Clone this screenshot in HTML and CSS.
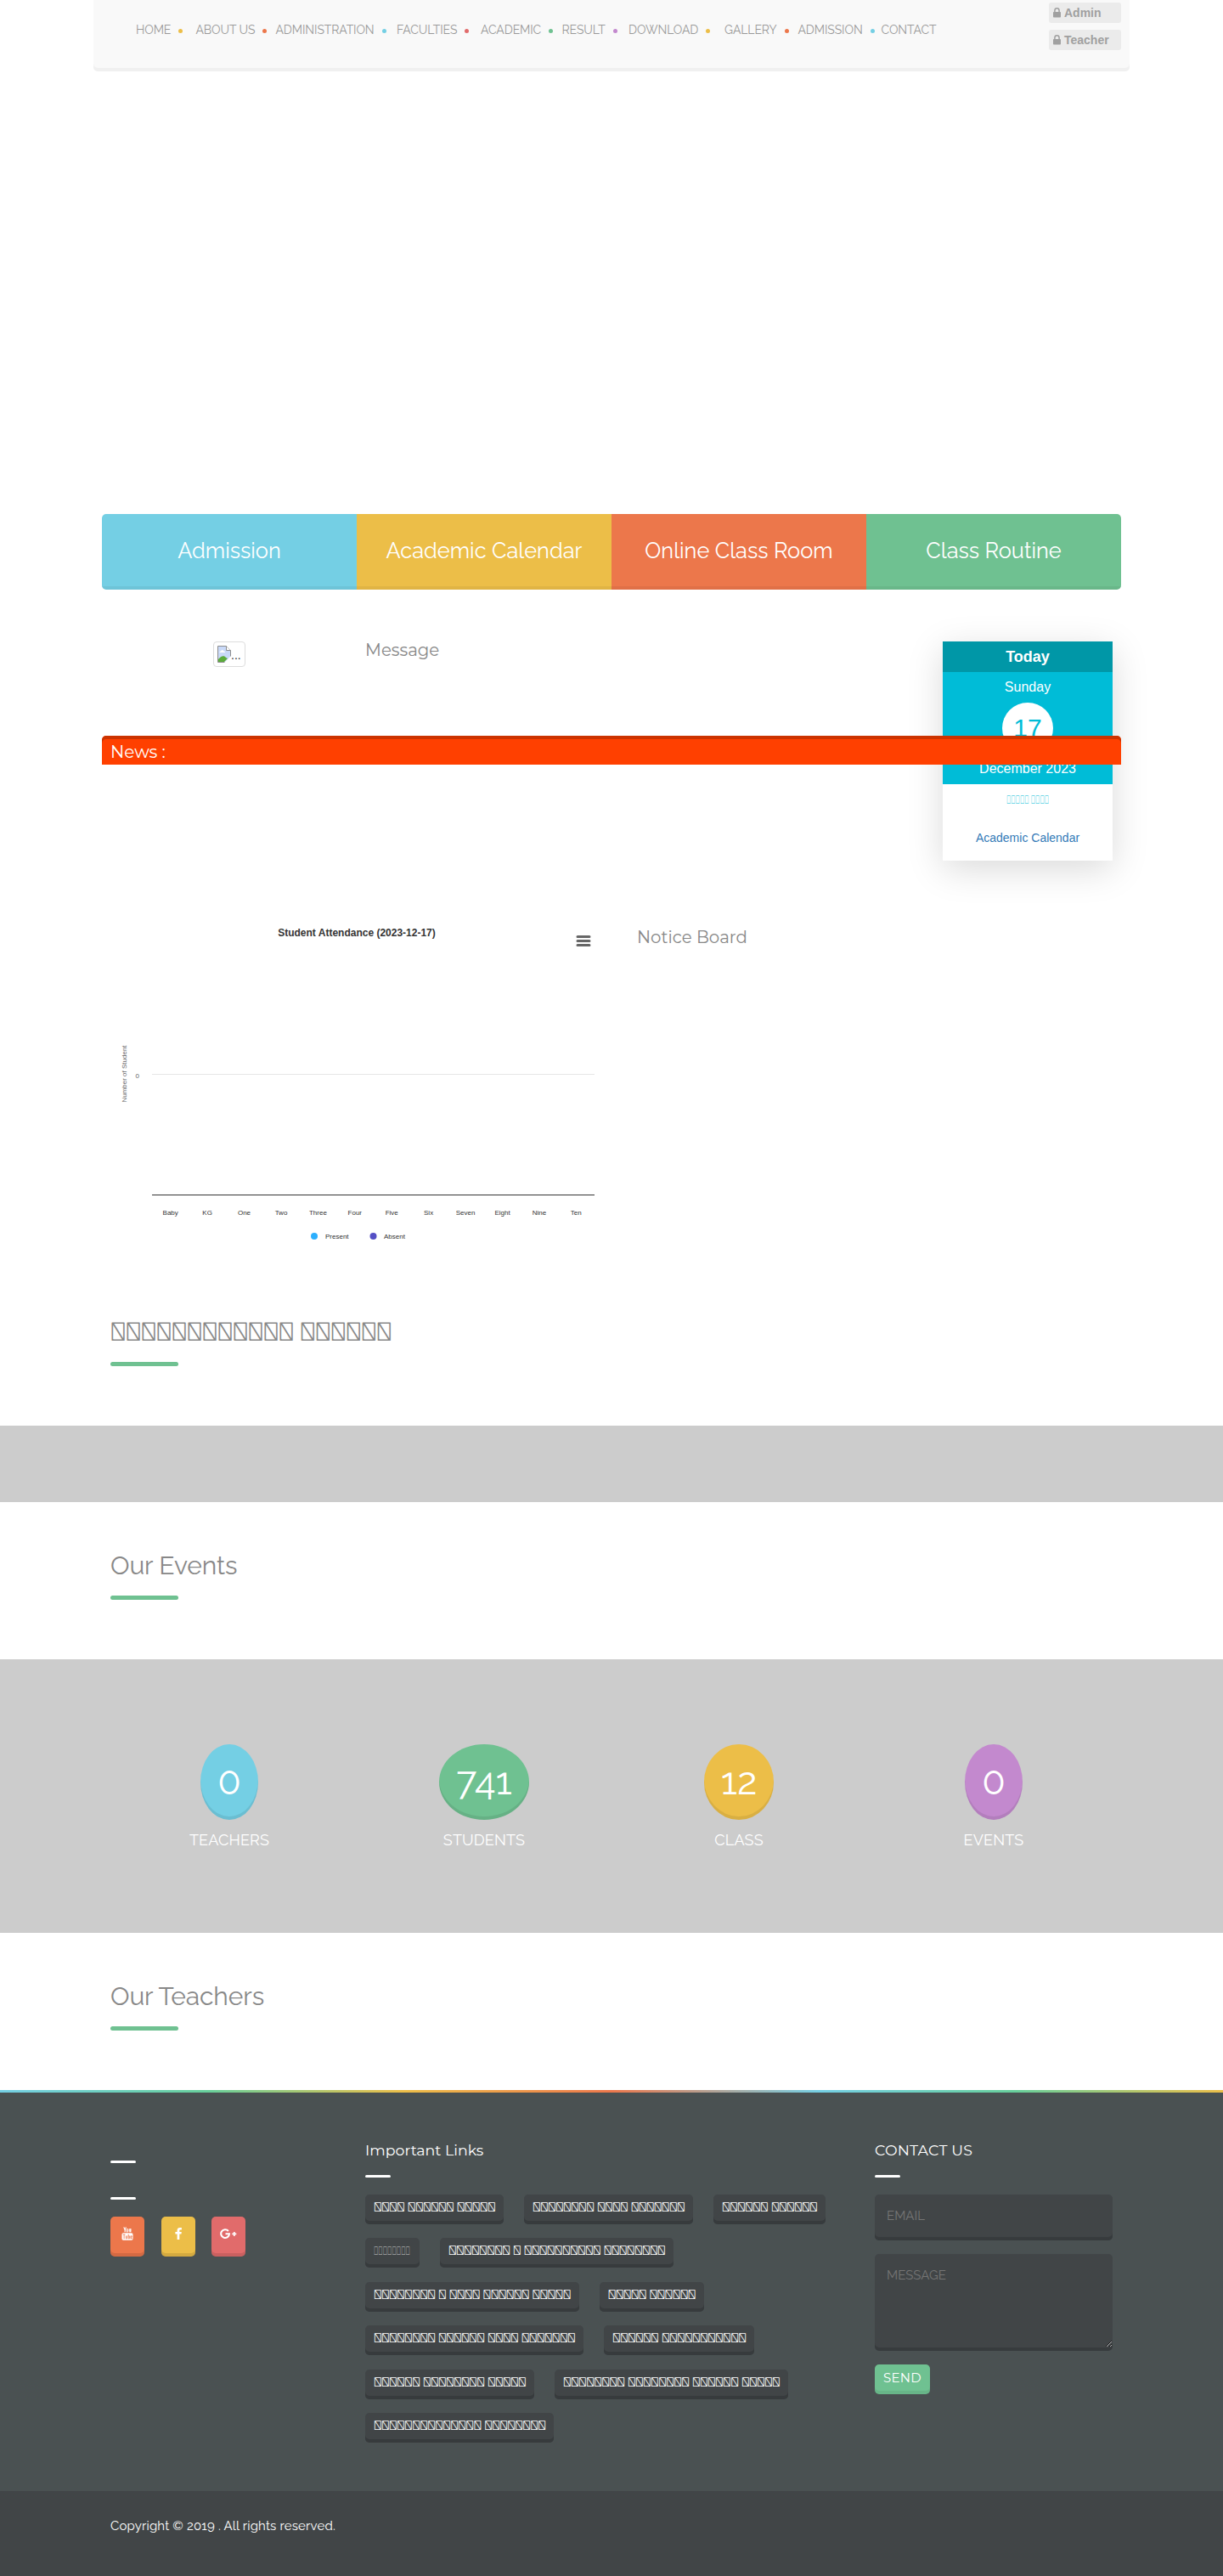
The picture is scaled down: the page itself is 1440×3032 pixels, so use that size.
FILE: index.html
```html
<!DOCTYPE html>
<html lang="en">
<head>
<meta charset="utf-8">
<title>School</title>
<link rel="stylesheet" href="styles.css">
</head>
<body>
<header class="topbar">
  <nav class="nav">
    <a class="yellow">HOME</a><a class="orange">ABOUT US</a><a class="blue">ADMINISTRATION</a><a class="red">FACULTIES</a><a class="green">ACADEMIC</a><a class="purple">RESULT</a><a class="yellow">DOWNLOAD</a><a class="orange">GALLERY</a><a class="blue">ADMISSION</a><a>CONTACT</a>
  </nav>
  <div class="logins">
    <a class="login"><svg width="9" height="12" viewBox="0 0 9 12"><path d="M1.9 5.5V3.4a2.6 2.6 0 0 1 5.2 0v2.1" fill="none" stroke="#a0a0a0" stroke-width="1.5"/><rect y="5" width="9" height="6.5" rx=".8" fill="#a0a0a0"/></svg>Admin</a>
    <a class="login"><svg width="9" height="12" viewBox="0 0 9 12"><path d="M1.9 5.5V3.4a2.6 2.6 0 0 1 5.2 0v2.1" fill="none" stroke="#a0a0a0" stroke-width="1.5"/><rect y="5" width="9" height="6.5" rx=".8" fill="#a0a0a0"/></svg>Teacher</a>
  </div>
</header>

<section class="features">
  <a class="bg-blue">Admission</a><a class="bg-yellow">Academic Calendar</a><a class="bg-orange">Online Class Room</a><a class="bg-green">Class Routine</a>
</section>

<section class="intro">
  <div class="portrait"><span class="thumb"><svg width="16" height="20" viewBox="0 0 16 20"><path d="M.5.5h10l5 5v14H.5z" fill="#c9d9f8" stroke="#8d8d8d"/><path d="M10.5.5v5h5" fill="#fff" stroke="#8d8d8d"/><path d="M2.500 8c0-1 .8-1.500 1.500-1.500.5-1.800 3-1.800 3.500 0 1 0 1.500.5 1.500 1.500z" fill="#fff"/><path d="M1 19v-3c3-4 7-5 9-2l2 1-4 4z" fill="#5cac3c"/><path d="M8 20l8-8v8z" fill="#fff"/></svg><span>...</span></span></div>
  <h3 class="message">Message</h3>
  <aside class="calendar">
    <div class="cal-head">Today</div>
    <div class="cal-body"><span>Sunday</span><b>17</b><span>December 2023</span></div>
    <div class="cal-foot"><span class="cal-local" data-words="5 4"></span><a>Academic Calendar</a></div>
  </aside>
</section>
<div class="news">News :</div>

<section class="board">
  <svg class="chart" width="590" height="420" viewBox="120 1070 590 420">
    <text x="420" y="1102" text-anchor="middle" font-size="12" font-weight="bold" fill="#333">Student Attendance (2023-12-17)</text>
    <path d="M680 1102.500h14M680 1107.500h14M680 1112.500h14" stroke="#666" stroke-width="3" stroke-linecap="round"/>
    <path d="M179 1264.500h521" stroke="#e6e6e6" shape-rendering="crispEdges"/>
    <path d="M179 1406.500h521" stroke="#333" shape-rendering="crispEdges"/>
    <text transform="translate(149 1264) rotate(-90)" text-anchor="middle" fill="#666">Number of Student</text>
    <text x="164" y="1269" text-anchor="end" fill="#666">0</text>
    <g text-anchor="middle">
      <text x="200.700" y="1430">Baby</text><text x="244.100" y="1430">KG</text><text x="287.500" y="1430">One</text><text x="331" y="1430">Two</text><text x="374.400" y="1430">Three</text><text x="417.800" y="1430">Four</text><text x="461.200" y="1430">Five</text><text x="504.600" y="1430">Six</text><text x="548" y="1430">Seven</text><text x="591.500" y="1430">Eight</text><text x="634.900" y="1430">Nine</text><text x="678.300" y="1430">Ten</text>
    </g>
    <circle cx="370" cy="1455" r="4" fill="#2caffe"/><text x="383" y="1458">Present</text>
    <circle cx="439.500" cy="1455" r="4" fill="#544fc5"/><text x="452" y="1458">Absent</text>
  </svg>
  <h3 class="notice">Notice Board</h3>
</section>

<section class="titled"><h2 class="local" data-words="12 6"></h2></section>
<div class="band"></div>
<section class="titled"><h2>Our Events</h2></section>
<section class="counts">
  <div><b class="bg-blue">0</b><span>TEACHERS</span></div>
  <div><b class="bg-green">741</b><span>STUDENTS</span></div>
  <div><b class="bg-yellow">12</b><span>CLASS</span></div>
  <div><b class="bg-purple">0</b><span>EVENTS</span></div>
</section>
<section class="titled"><h2>Our Teachers</h2></section>

<footer class="footer">
  <div class="foot-cols">
    <div class="social-col">
      <i class="rule"></i><i class="rule"></i>
      <div class="social">
        <a class="bg-orange"><svg width="14" height="16" viewBox="0 0 14 16"><path d="M2.800.4l1.300 3.300V6.300M5.400.4L4.100 3.700" fill="none" stroke="#fff" stroke-width="1.100"/><rect x="6" y="2.500" width="1.700" height="3.600" rx=".8" fill="none" stroke="#fff"/><path d="M9.300 2.200v3.300q.4 1 1.500 0V2.200v4.100" fill="none" stroke="#fff"/><rect x=".5" y="7.300" width="13" height="8.400" rx="1.600" fill="#fff"/><path d="M1.700 9h2.800M3.100 9v5.200M5.300 10.500v3.200q.6.8 1.400 0v-3.200M8.200 8.700v5.100h1.200v-3H8.200M12.200 13v.8h-1.300v-3h1.300v1.400h-1.300" fill="none" stroke="#ec774b" stroke-width=".8"/></svg></a>
        <a class="bg-yellow"><svg width="8" height="14" viewBox="0 0 8 14"><path d="M7.900.1v2.300H6.500c-1 0-1.200.5-1.200 1.200v1.500h2.500l-.3 2.500H5.300V14H2.600V7.600H.4V5.100h2.200V3.200C2.600 1.100 3.900 0 5.900 0c.9 0 1.700.1 2 .1z" fill="#fff"/></svg></a>
        <a class="bg-red"><svg width="20" height="13" viewBox="0 0 20 13"><path d="M9.900 3A4.900 4.900 0 1 0 11 6.300H6.500" fill="none" stroke="#fff" stroke-width="2.100"/><path d="M14.300 6.400h5M16.800 3.900v5" stroke="#fff" stroke-width="1.700"/></svg></a>
      </div>
    </div>
    <div class="links-col">
      <h4>Important Links</h4><i class="rule"></i>
      <div class="links">
        <a data-words="4 6 5"></a>
        <a data-words="8 4 7"></a>
        <a data-words="6 6"></a>
        <a class="small"><span data-words="8"></span></a>
        <a data-words="8 1 10 8"></a>
        <a data-words="8 1 4 6 5"></a>
        <a data-words="5 6"></a>
        <a data-words="8 6 4 7"></a>
        <a data-words="6 11"></a>
        <a data-words="6 8 5"></a>
        <a data-words="8 8 6 5"></a>
        <a data-words="14 8"></a>
      </div>
    </div>
    <form class="contact-col">
      <h4 class="wide">CONTACT US</h4><i class="rule"></i>
      <input placeholder="EMAIL">
      <textarea placeholder="MESSAGE"></textarea>
      <button type="button">SEND</button>
    </form>
  </div>
  <div class="copy"><p>Copyright © 2019 . All rights reserved.</p></div>
</footer>
<script src="words.js"></script>
</body>
</html>
```
FILE: words.js
```js
// Fills each label with words of placeholder glyphs; data-words lists the word lengths.
document.querySelectorAll('[data-words]').forEach(function (el) {
  el.textContent = el.dataset.words.split(' ').map(function (n) {
    return '\uE000'.repeat(Number(n));
  }).join(' ');
});
```
FILE: styles.css
```css
* { box-sizing: border-box; }
body { margin: 0; background: #fff; font-family: Raleway, sans-serif; font-size: 15px; color: #777; }
h2, h3, h4, p { margin: 0; font-weight: 400; }

.bg-blue { background: #74cfe4; }
.bg-yellow { background: #ecbe48; }
.bg-orange { background: #ec774b; }
.bg-green { background: #6fc191; }
.bg-purple { background: #c389ce; }
.bg-red { background: #e16b6b; }

.topbar { width: 1220px; height: 84px; margin: 0 auto; padding: 3px 10px 0 50px; display: flex; justify-content: space-between; background: #f9f9f9; border-radius: 0 0 5px 5px; box-shadow: inset 0 -4px #f0f0f0; }
.nav { display: grid; align-content: start; grid-template-columns: 70.500px 94px 142.500px 99px 95.500px 78.500px 113px 86.500px 98px 70px; padding-top: 23px; font-size: 14px; letter-spacing: -.1px; line-height: 18px; color: #999; }
.nav a { display: flex; align-items: center; gap: 9px; white-space: nowrap; }
.nav a[class]::after { content: ""; width: 5px; height: 5px; margin-top: 2px; border-radius: 50%; }
.nav .yellow::after { background: #ecbe48; }
.nav .orange::after { background: #ec774b; }
.nav .blue::after { background: #74cfe4; }
.nav .red::after { background: #e16b6b; }
.nav .green::after { background: #6fc191; }
.nav .purple::after { background: #c389ce; }
.logins { display: flex; flex-direction: column; gap: 8px; }
.login { display: flex; align-items: center; gap: 4px; width: 85px; height: 24px; padding-left: 5px; border-radius: 3px; background: #ebebeb; font: bold 14px "Liberation Sans", sans-serif; color: #a0a0a0; }

.features { width: 1200px; height: 89px; margin: 521px auto 0; display: grid; grid-template-columns: repeat(4, 1fr); border-radius: 5px; overflow: hidden; }
.features a { display: flex; align-items: center; justify-content: center; padding-bottom: 4px; font-size: 25.400px; color: #fff; box-shadow: inset 0 -4px rgba(0, 0, 0, .05); }

.intro { width: 1180px; height: 172px; margin: 0 auto; padding-top: 61px; display: grid; grid-template-columns: 300px 1fr 200px; align-items: start; }
.portrait { display: flex; justify-content: center; padding-right: 20px; }
.thumb { display: flex; align-items: flex-end; width: 38px; height: 30px; padding: 4px; border: 1px solid #ddd; border-radius: 4px; font: 14px/18px "Liberation Sans", sans-serif; color: #333; }
.message, .notice { font: 400 19.800px/22px Montserrat, sans-serif; color: #888; }
.message { line-height: 20px; }
.calendar { height: 258px; background: #fff; text-align: center; font-family: "Liberation Sans", sans-serif; box-shadow: 0 10px 40px rgba(0, 0, 0, .15); }
.cal-head { height: 36px; background: #0097a7; color: #fff; font-size: 18px; font-weight: bold; line-height: 36px; }
.cal-body { height: 132px; background: #00bcd7; color: #fff; font-size: 16px; line-height: 36px; display: flex; flex-direction: column; align-items: center; }
.cal-body b { flex: none; width: 60px; height: 60px; border-radius: 50%; background: #fff; color: #00bcd7; font-size: 30px; font-weight: 400; line-height: 60px; }
.cal-foot { display: flex; flex-direction: column; gap: 24px; padding-top: 8px; font-size: 14px; line-height: 20px; color: #337ab7; }
.cal-foot a { padding-top: 1px; }
.cal-local { color: #00bcd7; transform: scaleX(.51); }
.news { position: relative; width: 1200px; height: 34px; margin: 0 auto; padding: 6px 10px 0; background: #ff4000; box-shadow: inset 0 4px #cc3300; border-radius: 5px 5px 0 0; font: 400 20px/26px Montserrat, sans-serif; color: #fff; }

.board { width: 1200px; height: 593px; margin: 0 auto; padding-top: 170px; display: grid; grid-template-columns: 630px 1fr; align-items: start; }
.chart { font: 8px "Liberation Sans", sans-serif; fill: #333; }
.notice { padding-top: 22px; }

.titled { height: 185px; padding: 54px 130px 0; }
.titled h2 { font-size: 30px; line-height: 41px; letter-spacing: -.12px; color: #888; }
.titled .local { letter-spacing: -.25px; }
.titled h2::after { content: ""; display: block; width: 80px; height: 5px; margin-top: 15px; border-radius: 3px; background: #6fc191; }
.band { height: 90px; background: #ccc; }
.counts { height: 322px; padding: 100px 120px 0; display: grid; grid-template-columns: repeat(4, 1fr); background: #ccc; color: #fff; }
.counts div { display: flex; flex-direction: column; align-items: center; }
.counts b { height: 89px; padding: 0 20px; border-radius: 50%; font-size: 45px; font-weight: 400; line-height: 87px; box-shadow: inset 0 -4px rgba(0, 0, 0, .08); }
.counts span { margin-top: 14px; font-size: 18px; letter-spacing: .15px; line-height: 20px; }

.footer { background: #4a5152; color: #fff; border-top: 3px solid; border-image: linear-gradient(90deg, #74cfe4, #67cf9b 17%, #ecbe48 33%, #ec774b 50%, #74cfe4 67%, #67cf9b 83%, #ecbe48) 1; }
.foot-cols { height: 469px; padding: 58px 130px 0; display: grid; grid-template-columns: 300px 600px 280px; align-items: start; }
.rule { display: block; width: 30px; height: 3px; border-radius: 2px; background: #fff; }
.social-col { display: flex; flex-direction: column; gap: 40px; padding-top: 22px; }
.social { display: flex; gap: 19.500px; margin-top: -20px; }
.social a { display: flex; align-items: center; justify-content: center; width: 40px; height: 47px; padding-bottom: 7px; border-radius: 5px; box-shadow: inset 0 -4px rgba(0, 0, 0, .1); }
h4 { font: 400 17.400px/20px Montserrat, sans-serif; color: #fff; margin-bottom: 19px; }
.wide { letter-spacing: .2px; }
.links { display: flex; flex-wrap: wrap; gap: 16.400px 24px; width: 580px; margin-top: 20px; }
.links a { height: 35px; padding: 5px 10px 0; border-radius: 5px; background: #414547; box-shadow: inset 0 -4px #373b3d; font-size: 15px; line-height: 20px; letter-spacing: -.09px; white-space: nowrap; color: #fff; }
.links .small { width: 64px; font: 14px/20px "Liberation Sans", sans-serif; letter-spacing: 0; color: #ccc; }
.small span { display: block; width: 84px; transform: scaleX(.51); transform-origin: left; }
.contact-col { display: flex; flex-direction: column; align-items: flex-start; }
input, textarea, button { border: 0; border-radius: 5px; font: 400 15px/20px Raleway, sans-serif; color: #fff; background: #414547; box-shadow: inset 0 -4px #373b3d; width: 280px; display: block; }
input { height: 54px; margin: 20px 0 16px; padding: 0 14px 4px; }
textarea { height: 110px; margin-bottom: 20px; padding: 15px 14px; box-shadow: 0 4px #373b3d; }
::placeholder { color: #757575; opacity: 1; }
button { width: 65px; height: 35px; padding: 0 0 4px; background: #6fc191; box-shadow: inset 0 -4px rgba(0, 0, 0, .06); font-family: Montserrat, sans-serif; letter-spacing: .3px; }
.copy { height: 100px; padding: 31px 130px 0; background: #414547; font-size: 15px; line-height: 20px; letter-spacing: .17px; }
```
